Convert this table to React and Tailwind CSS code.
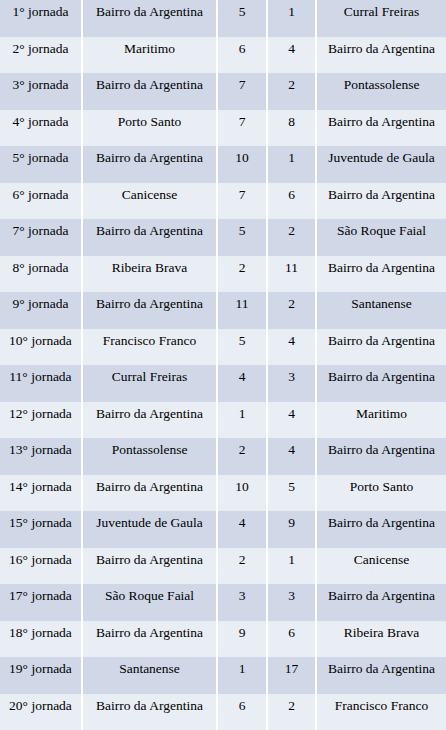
import React from 'react';

const jogos = [
  ['1° jornada', 'Bairro da Argentina', 5, 1, 'Curral Freiras'],
  ['2° jornada', 'Maritimo', 6, 4, 'Bairro da Argentina'],
  ['3° jornada', 'Bairro da Argentina', 7, 2, 'Pontassolense'],
  ['4° jornada', 'Porto Santo', 7, 8, 'Bairro da Argentina'],
  ['5° jornada', 'Bairro da Argentina', 10, 1, 'Juventude de Gaula'],
  ['6° jornada', 'Canicense', 7, 6, 'Bairro da Argentina'],
  ['7° jornada', 'Bairro da Argentina', 5, 2, 'São Roque Faial'],
  ['8° jornada', 'Ribeira Brava', 2, 11, 'Bairro da Argentina'],
  ['9° jornada', 'Bairro da Argentina', 11, 2, 'Santanense'],
  ['10° jornada', 'Francisco Franco', 5, 4, 'Bairro da Argentina'],
  ['11° jornada', 'Curral Freiras', 4, 3, 'Bairro da Argentina'],
  ['12° jornada', 'Bairro da Argentina', 1, 4, 'Maritimo'],
  ['13° jornada', 'Pontassolense', 2, 4, 'Bairro da Argentina'],
  ['14° jornada', 'Bairro da Argentina', 10, 5, 'Porto Santo'],
  ['15° jornada', 'Juventude de Gaula', 4, 9, 'Bairro da Argentina'],
  ['16° jornada', 'Bairro da Argentina', 2, 1, 'Canicense'],
  ['17° jornada', 'São Roque Faial', 3, 3, 'Bairro da Argentina'],
  ['18° jornada', 'Bairro da Argentina', 9, 6, 'Ribeira Brava'],
  ['19° jornada', 'Santanense', 1, 17, 'Bairro da Argentina'],
  ['20° jornada', 'Bairro da Argentina', 6, 2, 'Francisco Franco'],
];

export default function App() {
  return (
    <div className="w-[446px] h-[730px] bg-white overflow-hidden [font-family:'Liberation_Serif',serif] text-[13.5px] leading-[16px] text-black">
      <div className="grid grid-cols-[81px_133px_48px_47px_1fr] gap-x-[2px] auto-rows-[36.5px]">
        {jogos.map((row, i) =>
          row.map((cell, j) => (
            <div
              key={i + '-' + j}
              className={`pt-[4px] text-center whitespace-nowrap ${i % 2 === 0 ? 'bg-[#d0d8e8]' : 'bg-[#e9edf4]'}`}
            >
              {cell}
            </div>
          ))
        )}
      </div>
    </div>
  );
}
